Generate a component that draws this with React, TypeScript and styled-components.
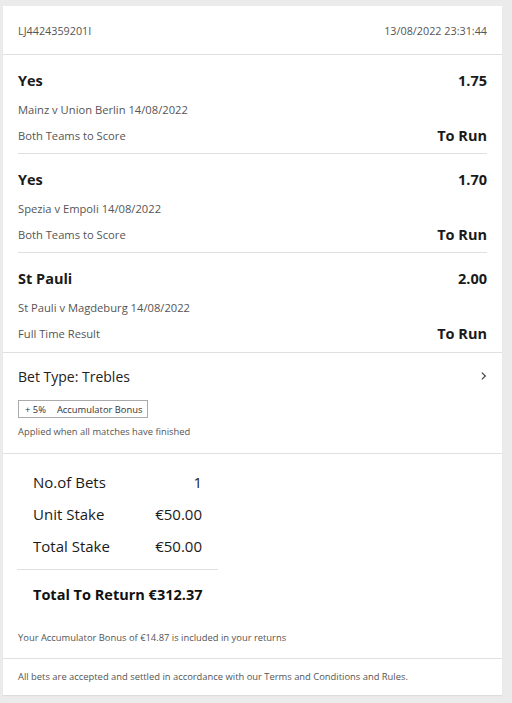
import React from 'react';
import styled, { createGlobalStyle } from 'styled-components';

const GlobalStyle = createGlobalStyle`
  html, body {
    margin: 0;
    padding: 0;
    background: #ebebeb;
    font-family: "Open Sans", "Noto Sans", Arial, sans-serif;
    color: #222;
  }
`;

const Page = styled.div`
  padding: 6px 10px 8px 3px;
`;

const Card = styled.div`
  width: 499px;
  background: #fff;
  box-shadow: 0 1px 1px rgba(0, 0, 0, 0.06);
`;

const Header = styled.div`
  height: 48px;
  padding: 0 15px;
  display: flex;
  justify-content: space-between;
  align-items: center;
  font-size: 10.8px;
  color: #555;
  border-bottom: 1px solid #e0e0e0;
`;

const Selection = styled.div<{ last?: boolean }>`
  margin: 0 15px;
  height: 99px;
  padding-top: 16px;
  box-sizing: border-box;
  border-bottom: 1px solid ${p => (p.last ? 'transparent' : '#e0e0e0')};
  display: flex;
  flex-direction: column;
`;

const Row = styled.div`
  display: flex;
  justify-content: space-between;
  align-items: center;
`;

const Pick = styled.span`
  font-size: 14.5px;
  font-weight: 700;
  line-height: 20px;
  color: #1a1a1a;
`;

const Event = styled.div`
  font-size: 11.2px;
  line-height: 18px;
  color: #555;
  margin-top: 10px;
`;

const MarketRow = styled(Row)`
  margin-top: 7px;
  line-height: 20px;
`;

const Market = styled.span`
  font-size: 11.2px;
  color: #555;
`;

const BetType = styled.div`
  border-top: 1px solid #e0e0e0;
  border-bottom: 1px solid #e0e0e0;
  padding: 14px 15px 14px;
`;

const BetTypeTitle = styled(Row)`
  font-size: 14px;
  line-height: 20px;
  color: #222;
`;

const Chevron = styled.svg`
  width: 6px;
  height: 8px;
  margin-top: -2px;
`;

const Badge = styled.div`
  display: inline-flex;
  align-items: center;
  gap: 11px;
  margin-top: 13px;
  height: 18px;
  box-sizing: border-box;
  padding: 0 5px 0 6px;
  border: 1px solid #aaa;
  font-size: 9.4px;
  color: #333;
`;

const Note = styled.div<{ top?: number }>`
  font-size: 9.4px;
  line-height: 14px;
  color: #555;
  margin-top: ${p => p.top ?? 0}px;
`;

const Summary = styled.div`
  padding: 12px 15px 13px;
`;

const Totals = styled.div`
  width: 201px;
  margin-left: -1px;
`;

const Line = styled.div`
  display: grid;
  grid-template-columns: 1fr auto;
  width: 169px;
  padding-left: 16px;
  font-size: 15px;
  line-height: 32px;
  color: #1a1a1a;
`;

const Rule = styled.div`
  height: 1px;
  background: #e0e0e0;
  margin-top: 7px;
`;

const Return = styled.div`
  padding-left: 16px;
  margin-top: 15px;
  font-size: 14.5px;
  line-height: 20px;
  font-weight: 700;
  color: #111;
`;

const Footer = styled.div`
  border-top: 1px solid #e0e0e0;
  padding: 11px 15px;
`;

const selections = [
  { pick: 'Yes', odds: '1.75', event: 'Mainz v Union Berlin 14/08/2022', market: 'Both Teams to Score' },
  { pick: 'Yes', odds: '1.70', event: 'Spezia v Empoli 14/08/2022', market: 'Both Teams to Score' },
  { pick: 'St Pauli', odds: '2.00', event: 'St Pauli v Magdeburg 14/08/2022', market: 'Full Time Result' },
];

export default function App() {
  return (
    <Page>
      <GlobalStyle />
      <Card>
        <Header>
          <span>LJ4424359201I</span>
          <span>13/08/2022 23:31:44</span>
        </Header>
        {selections.map((s, i) => (
          <Selection key={i} last={i === selections.length - 1}>
            <Row>
              <Pick>{s.pick}</Pick>
              <Pick>{s.odds}</Pick>
            </Row>
            <Event>{s.event}</Event>
            <MarketRow>
              <Market>{s.market}</Market>
              <Pick>To Run</Pick>
            </MarketRow>
          </Selection>
        ))}
        <BetType>
          <BetTypeTitle>
            <span>Bet Type: Trebles</span>
            <Chevron viewBox="0 0 6 8">
              <path d="M0.8 0.6 L4.4 4 L0.8 7.4" fill="none" stroke="#444" strokeWidth="1.2" />
            </Chevron>
          </BetTypeTitle>
          <Badge>
            <span>+ 5%</span>
            <span>Accumulator Bonus</span>
          </Badge>
          <Note top={7}>Applied when all matches have finished</Note>
        </BetType>
        <Summary>
          <Totals>
            <Line><span>No.of Bets</span><span>1</span></Line>
            <Line><span>Unit Stake</span><span>€50.00</span></Line>
            <Line><span>Total Stake</span><span>€50.00</span></Line>
            <Rule />
            <Return>Total To Return €312.37</Return>
          </Totals>
          <Note top={26}>Your Accumulator Bonus of €14.87 is included in your returns</Note>
        </Summary>
        <Footer>
          <Note>All bets are accepted and settled in accordance with our Terms and Conditions and Rules.</Note>
        </Footer>
      </Card>
    </Page>
  );
}
